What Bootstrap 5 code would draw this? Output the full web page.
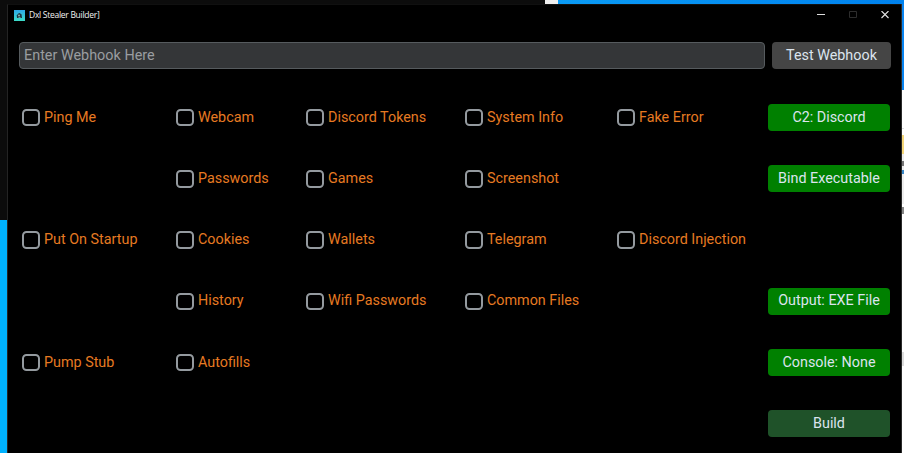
<!DOCTYPE html>
<html lang="en">
<head>
<meta charset="utf-8">
<meta name="viewport" content="width=device-width, initial-scale=1">
<title>Builder</title>
<link href="https://cdn.jsdelivr.net/npm/bootstrap@5.3.0/dist/css/bootstrap.min.css" rel="stylesheet">
<style>
html, body { height: 100%; }
body { font-family: Roboto, "Liberation Sans", sans-serif; font-size: 14.35px; background: #000; }
/* desktop visible around the window */
.desk-top { height: 4px; background: #0c0c0c; }
.desk-dark { width: 545px; }
.desk-page { width: 13px; background: #eee; }
.desk-sky { background: linear-gradient(90deg, #0a9bf5, #0082ee); }
.desk-left { width: 7px; background: linear-gradient(#0c0c0c 216px, #00b2ff 216px); }
.desk-right { width: 3px; border-left: 1px solid #2a2a2a;
  background: linear-gradient(#0a84f0 86px, #fff 86px 124px, #ddd 124px 125px, #fff 125px 131px, #f5d77a 131px 150px, #eee 150px 157px, #777 157px 162px, #eee 162px 166px, #3a88c8 166px 170px, #eee 170px 200px, #fff 200px 203px, #888 203px 210px, #fff 210px 348px, #ddd 348px 362px, #fff 362px); }
.app { min-width: 0; background: #000; border-left: 1px solid #242424; border-top: 1px solid #101010; }
.titlebar { height: 20px; padding: 0 12px 0 6px; }
.app-title { font: 8.5px/12px "Open Sans", "Noto Sans", sans-serif; color: #f2f2f2; letter-spacing: -.28px; }
.win-btns { gap: 24px; }
.webhook-row { padding: 17px 10px 0 11px; gap: 7px; }
.hook-input, .hook-input:focus { height: 27px; width: 746px; padding: 0 4px 1px; font-size: 14.4px; background: #343638; border: 1.5px solid #565b5e; border-radius: 4px; color: #dce4ee; box-shadow: none; }
.hook-input::placeholder { color: #9a9da0; opacity: 1; }
.btn.tool-btn { height: 27px; width: 122px; padding: 0; font-size: 14.35px; line-height: 26px; border: 0; border-radius: 4px; color: #dce4ee; background: #008000; }
.btn.tool-btn.test-btn { width: 119px; background: #454545; }
.btn.tool-btn.build-btn { background: #1f5229; }
.option-grid { display: grid; grid-template-columns: 154px 130px 159px 152px 151px 122px; grid-template-rows: repeat(6, 61.25px); padding: 18px 0 0 14px; align-items: center; }
.opt { gap: 4.5px; line-height: 18px; color: #e67a22; }
.opt .form-check-input { width: 17.5px; height: 17.5px; margin: 0; border: 2px solid #949a9f; border-radius: 4.5px; background-color: #000; }
.in-last { grid-column: 6; }
</style>
<script src="https://cdn.jsdelivr.net/npm/bootstrap@5.3.0/dist/js/bootstrap.bundle.min.js"></script>
</head>
<body class="d-flex flex-column overflow-hidden">
<div class="desk-top d-flex flex-shrink-0"><div class="desk-dark"></div><div class="desk-page"></div><div class="desk-sky flex-grow-1"></div></div>
<div class="d-flex flex-grow-1">
  <div class="desk-left flex-shrink-0"></div>
  <main class="app flex-grow-1">
    <header class="titlebar d-flex align-items-center justify-content-between">
      <div class="d-flex align-items-center gap-1">
        <svg width="11" height="11" viewBox="0 0 11 11"><defs><linearGradient id="logo" x2="0" y2="1"><stop stop-color="#2ea8e8"/><stop offset="1" stop-color="#3cdcc8"/></linearGradient></defs><rect width="11" height="11" fill="url(#logo)"/><path d="M3 8 2.8 5.5 4 3.8 5.5 3 7.5 4.2 8 8z" fill="#1b3444"/><circle cx="5" cy="5.5" r=".9" fill="#8fc9c4"/><path d="M4.5 7.5h2" stroke="#6a9d9a"/></svg>
        <span class="app-title">Dxl Stealer Builder]</span>
      </div>
      <div class="win-btns d-flex align-items-center">
        <svg width="8" height="8" viewBox="0 0 8 8"><path d="M0 3.5h8" stroke="#ddd"/></svg>
        <svg width="8" height="8" viewBox="0 0 8 8"><path d="M.5.5h7v6h-7z" fill="none" stroke="#2d2d2d"/></svg>
        <svg width="8" height="8" viewBox="0 0 8 8"><path d="m.5 0 7 7m0-7-7 7" stroke="#e4e4e4" stroke-width="1.1"/></svg>
      </div>
    </header>
    <div class="webhook-row d-flex">
      <input class="form-control hook-input" type="text" placeholder="Enter Webhook Here" aria-label="Webhook">
      <button class="btn tool-btn test-btn" type="button">Test Webhook</button>
    </div>
    <div class="option-grid">
      <label class="opt d-flex align-items-center"><input class="form-check-input" type="checkbox">Ping Me</label>
      <label class="opt d-flex align-items-center"><input class="form-check-input" type="checkbox">Webcam</label>
      <label class="opt d-flex align-items-center"><input class="form-check-input" type="checkbox">Discord Tokens</label>
      <label class="opt d-flex align-items-center"><input class="form-check-input" type="checkbox">System Info</label>
      <label class="opt d-flex align-items-center"><input class="form-check-input" type="checkbox">Fake Error</label>
      <button class="btn tool-btn" type="button">C2: Discord</button>

      <span></span>
      <label class="opt d-flex align-items-center"><input class="form-check-input" type="checkbox">Passwords</label>
      <label class="opt d-flex align-items-center"><input class="form-check-input" type="checkbox">Games</label>
      <label class="opt d-flex align-items-center"><input class="form-check-input" type="checkbox">Screenshot</label>
      <button class="btn tool-btn in-last" type="button">Bind Executable</button>

      <label class="opt d-flex align-items-center"><input class="form-check-input" type="checkbox">Put On Startup</label>
      <label class="opt d-flex align-items-center"><input class="form-check-input" type="checkbox">Cookies</label>
      <label class="opt d-flex align-items-center"><input class="form-check-input" type="checkbox">Wallets</label>
      <label class="opt d-flex align-items-center"><input class="form-check-input" type="checkbox">Telegram</label>
      <label class="opt d-flex align-items-center"><input class="form-check-input" type="checkbox">Discord Injection</label>
      <span></span>

      <span></span>
      <label class="opt d-flex align-items-center"><input class="form-check-input" type="checkbox">History</label>
      <label class="opt d-flex align-items-center"><input class="form-check-input" type="checkbox">Wifi Passwords</label>
      <label class="opt d-flex align-items-center"><input class="form-check-input" type="checkbox">Common Files</label>
      <button class="btn tool-btn in-last" type="button">Output: EXE File</button>

      <label class="opt d-flex align-items-center"><input class="form-check-input" type="checkbox">Pump Stub</label>
      <label class="opt d-flex align-items-center"><input class="form-check-input" type="checkbox">Autofills</label>
      <button class="btn tool-btn in-last" type="button">Console: None</button>

      <button class="btn tool-btn build-btn in-last" type="button">Build</button>
    </div>
  </main>
  <div class="desk-right flex-shrink-0"></div>
</div>
</body>
</html>
